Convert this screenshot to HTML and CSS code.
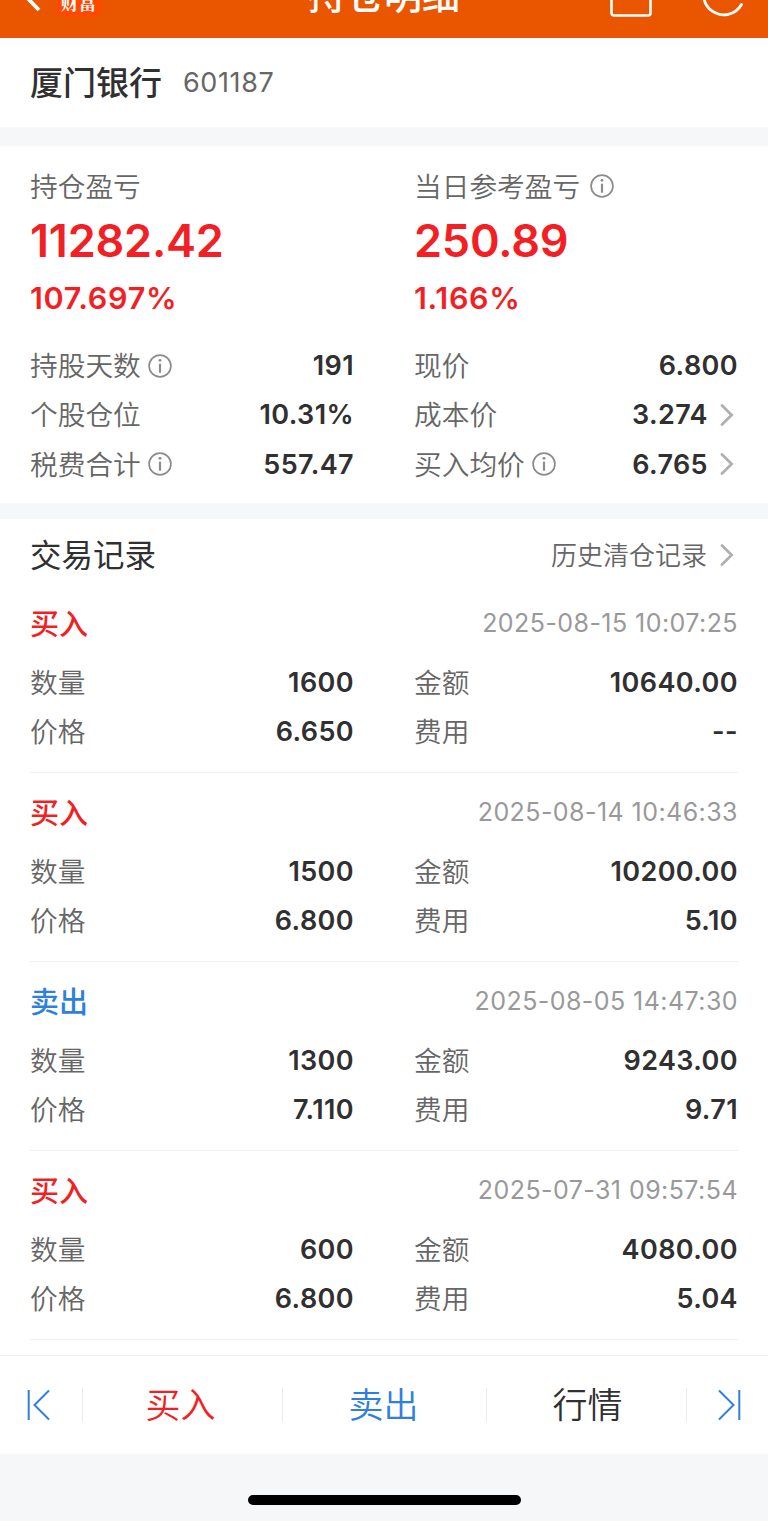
FILE: index.html
```html
<!DOCTYPE html>
<html lang="zh-CN">
<head>
    <meta charset="UTF-8">
    <meta name="viewport" content="width=device-width, initial-scale=1.0">
    <title>持仓明细</title>
    <link rel="stylesheet" href="styles.css">
</head>
<body>
    <svg class="sprite" width="0" height="0">
        <symbol id="info" viewBox="0 0 24 24">
            <circle cx="12" cy="12" r="10.9" fill="none" stroke="currentColor" stroke-width="1.7"/>
            <circle cx="12" cy="6.3" r="1.4" fill="currentColor"/>
            <path d="M12 9.7v9" fill="none" stroke="currentColor" stroke-width="2.2"/>
        </symbol>
        <symbol id="arrow" viewBox="0 0 14 22">
            <path d="M2 1.6l9.600 9.400L2 20.400" fill="none" stroke="currentColor" stroke-width="2.800" stroke-linecap="round"/>
        </symbol>
    </svg>

    <header class="navbar">
        <div class="navbar-inner">
            <div class="navbar-left">
                <svg class="back" width="24" height="44" viewBox="0 0 24 44"><path d="M21 38L5 21.500L21 5" fill="none" stroke="#fff" stroke-width="3.800"/></svg>
                <span class="logo">财富</span>
            </div>
            <h1>持仓明细</h1>
            <div class="navbar-right">
                <svg width="42" height="44" viewBox="0 0 42 44"><rect x="1.500" y="6" width="39" height="36.500" rx="2.500" fill="none" stroke="#fff" stroke-width="2.600"/></svg>
                <svg width="44" height="44" viewBox="0 0 44 44"><path d="M39.500 31.500A20.300 20.300 0 1 1 37 8" fill="none" stroke="#fff" stroke-width="2.800" stroke-linecap="round"/></svg>
            </div>
        </div>
    </header>

    <section class="stock">
        <h2>厦门银行</h2>
        <span class="code">601187</span>
    </section>

    <section class="summary">
        <div class="column">
            <div class="profit-label">持仓盈亏</div>
            <div class="profit">11282.42</div>
            <div class="percent">107.697%</div>
            <div class="row"><span class="label">持股天数<svg class="info"><use href="#info"/></svg></span><b>191</b></div>
            <div class="row"><span class="label">个股仓位</span><b>10.31%</b></div>
            <div class="row"><span class="label">税费合计<svg class="info"><use href="#info"/></svg></span><b>557.47</b></div>
        </div>
        <div class="column">
            <div class="profit-label">当日参考盈亏<svg class="info wide"><use href="#info"/></svg></div>
            <div class="profit">250.89</div>
            <div class="percent">1.166%</div>
            <div class="row"><span class="label">现价</span><b>6.800</b></div>
            <div class="row"><span class="label">成本价</span><b>3.274</b><svg class="arrow"><use href="#arrow"/></svg></div>
            <div class="row"><span class="label">买入均价<svg class="info"><use href="#info"/></svg></span><b>6.765</b><svg class="arrow"><use href="#arrow"/></svg></div>
        </div>
    </section>

    <section class="records">
        <div class="records-head">
            <h3>交易记录</h3>
            <a class="history"><span>历史清仓记录</span><svg class="arrow"><use href="#arrow"/></svg></a>
        </div>

        <div class="record">
            <div class="record-head"><span class="type buy">买入</span><time>2025-08-15 10:07:25</time></div>
            <div class="record-body">
                <div class="row"><span class="label">数量</span><b>1600</b></div>
                <div class="row"><span class="label">金额</span><b>10640.00</b></div>
                <div class="row"><span class="label">价格</span><b>6.650</b></div>
                <div class="row"><span class="label">费用</span><b>--</b></div>
            </div>
        </div>

        <div class="record">
            <div class="record-head"><span class="type buy">买入</span><time>2025-08-14 10:46:33</time></div>
            <div class="record-body">
                <div class="row"><span class="label">数量</span><b>1500</b></div>
                <div class="row"><span class="label">金额</span><b>10200.00</b></div>
                <div class="row"><span class="label">价格</span><b>6.800</b></div>
                <div class="row"><span class="label">费用</span><b>5.10</b></div>
            </div>
        </div>

        <div class="record">
            <div class="record-head"><span class="type sell">卖出</span><time>2025-08-05 14:47:30</time></div>
            <div class="record-body">
                <div class="row"><span class="label">数量</span><b>1300</b></div>
                <div class="row"><span class="label">金额</span><b>9243.00</b></div>
                <div class="row"><span class="label">价格</span><b>7.110</b></div>
                <div class="row"><span class="label">费用</span><b>9.71</b></div>
            </div>
        </div>

        <div class="record">
            <div class="record-head"><span class="type buy">买入</span><time>2025-07-31 09:57:54</time></div>
            <div class="record-body">
                <div class="row"><span class="label">数量</span><b>600</b></div>
                <div class="row"><span class="label">金额</span><b>4080.00</b></div>
                <div class="row"><span class="label">价格</span><b>6.800</b></div>
                <div class="row"><span class="label">费用</span><b>5.04</b></div>
            </div>
        </div>
    </section>

    <nav class="toolbar">
        <a class="step prev"><svg width="24" height="32" viewBox="0 0 24 32"><path d="M1.700 1v30M22 1.500L7.500 16L22 30.500" fill="none" stroke="currentColor" stroke-width="2"/></svg></a>
        <a class="action buy">买入</a>
        <a class="action sell middle">卖出</a>
        <a class="action quote">行情</a>
        <a class="step next"><svg width="24" height="32" viewBox="0 0 24 32"><path d="M22.300 1v30M2 1.500L16.500 16L2 30.500" fill="none" stroke="currentColor" stroke-width="2"/></svg></a>
    </nav>

    <div class="home-area"><div class="home-bar"></div></div>
</body>
</html>
```
FILE: styles.css
```css
* {
    box-sizing: border-box;
}
body {
    margin: 0;
    width: 768px;
    height: 1521px;
    overflow: hidden;
    display: flex;
    flex-direction: column;
    background: #f6f7f9;
    color: #303030;
    font-family: Inter, "Noto Sans CJK SC", sans-serif;
}
h1, h2, h3 {
    margin: 0;
    font-weight: 400;
}
.sprite {
    display: none;
}

.navbar {
    height: 38px;
    overflow: hidden;
    background: #ea5600;
    color: #fff;
}
.navbar-inner {
    display: grid;
    grid-template-columns: 200px 1fr 200px;
    align-items: center;
    height: 86px;
    margin-top: -48px;
}
.navbar-left {
    display: flex;
    align-items: center;
    padding-left: 18px;
}
.back {
    margin-top: -2px;
}
.logo {
    width: 45px;
    height: 44px;
    margin-left: 14px;
    padding-top: 20px;
    border-radius: 8px;
    background: #ff4800;
    font-family: "Noto Serif CJK SC", "Noto Sans CJK SC", serif;
    font-size: 18px;
    font-weight: 700;
    line-height: 18px;
    text-align: center;
}
.navbar h1 {
    padding-bottom: 5px;
    font-size: 38px;
    font-weight: 500;
    text-align: center;
}
.navbar-right {
    display: flex;
    justify-content: flex-end;
    gap: 50px;
    padding-right: 22px;
}

.stock {
    display: flex;
    align-items: center;
    height: 89px;
    padding: 0 30px;
    background: #fff;
}
.stock h2 {
    padding-bottom: 4px;
    font-size: 33px;
    font-weight: 500;
}
.code {
    margin-left: 21px;
    color: #666;
    font-size: 27px;
    letter-spacing: 0.6px;
}

.summary {
    display: grid;
    grid-template-columns: 324px 324px;
    gap: 60px;
    height: 357px;
    margin-top: 19px;
    padding: 16px 30px 0;
    background: #fff;
}
.profit-label {
    display: flex;
    align-items: center;
    height: 48px;
    padding-bottom: 3px;
    color: #666;
    font-size: 27.7px;
    font-weight: 350;
}
.profit {
    height: 62px;
    color: #f21f24;
    font-size: 45px;
    font-weight: 600;
    letter-spacing: -0.2px;
    line-height: 62px;
}
.percent {
    height: 53px;
    margin-bottom: 16px;
    color: #f21f24;
    font-size: 30.5px;
    font-weight: 600;
    letter-spacing: 0.7px;
    line-height: 52px;
}
.row {
    display: flex;
    align-items: center;
    height: 49.3px;
}
.label {
    display: flex;
    align-items: center;
    flex: 1;
    padding-bottom: 3px;
    color: #666;
    font-size: 27.7px;
    font-weight: 350;
}
.row b {
    font-size: 27px;
    font-weight: 600;
    letter-spacing: 0.4px;
}
.info {
    width: 24px;
    height: 24px;
    margin: 3px 0 0 7px;
    color: #8c8c8c;
}
.info.wide {
    margin-left: 10px;
}
.arrow {
    width: 14px;
    height: 22px;
    margin: 0 4px 0 12px;
    color: #b0b0b0;
}

.records {
    height: 836px;
    margin-top: 16px;
    padding: 0 30px;
    background: #fff;
}
.records-head {
    display: flex;
    align-items: center;
    justify-content: space-between;
    height: 65px;
    padding-top: 7px;
}
.records-head h3 {
    padding-bottom: 4px;
    font-size: 31.5px;
}
.history {
    display: flex;
    align-items: center;
    color: #666;
    font-size: 26px;
    font-weight: 350;
}
.history span {
    padding: 0 1px 3px 0;
}
.record {
    height: 189px;
    padding-top: 15px;
    border-bottom: 1px solid #f0f0f0;
}
.record-head {
    display: flex;
    align-items: center;
    justify-content: space-between;
    height: 48px;
    margin-bottom: 11px;
}
.type {
    padding-bottom: 3px;
    font-size: 29px;
    font-weight: 500;
}
.record time {
    color: #999;
    font-size: 25px;
    letter-spacing: 0.44px;
}
.record-body {
    display: grid;
    grid-template-columns: 324px 324px;
    column-gap: 60px;
}
.buy {
    color: #f21f24;
}
.sell {
    color: #2f7fe0;
}

/* bottom actions */
.toolbar {
    display: flex;
    align-items: center;
    height: 99px;
    border-top: 1px solid #efefef;
    background: #fff;
}
.toolbar a {
    display: flex;
    align-items: center;
    justify-content: center;
    height: 34px;
}
.toolbar .action {
    width: 200px;
    padding-bottom: 5px;
    border-left: 1px solid #ececec;
    font-size: 35px;
    font-weight: 350;
}
.toolbar .middle {
    width: 204px;
    padding-right: 2px;
}
.toolbar .action.buy {
    padding-right: 4px;
}
.action.quote {
    padding-left: 2px;
}
.step {
    width: 82px;
    color: #2f7fe0;
}
.step.prev {
    padding-right: 5px;
}
.step.next {
    padding-left: 2px;
    border-left: 1px solid #ececec;
}
.home-area {
    flex: 1;
    padding-top: 41px;
}
.home-bar {
    width: 273px;
    height: 10px;
    margin: 0 auto;
    border-radius: 5px;
    background: #000;
}
```
